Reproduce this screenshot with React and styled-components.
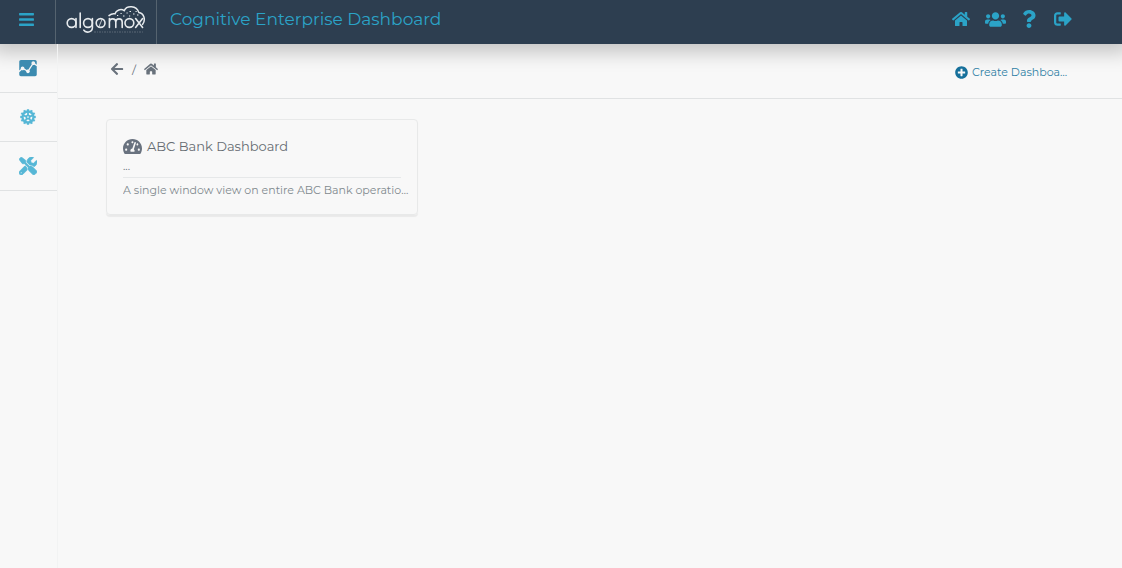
import React from "react";
import styled, { createGlobalStyle } from "styled-components";
import {
  FaArrowLeft,
  FaBars,
  FaHome,
  FaPlusCircle,
  FaQuestion,
  FaSignOutAlt,
  FaTachometerAlt,
  FaTools,
  FaUsers
} from "react-icons/fa";
import { IoMdAnalytics } from "react-icons/io";

const navy = "#2d3e50";
const cyan = "#2ba3c7";
const line = "#e0e2e3";
const slate = "#69727c";

const GlobalStyle = createGlobalStyle`
  *, *::before, *::after {
    box-sizing: border-box;
  }
  body {
    margin: 0;
    background: #f8f8f8;
    color: ${slate};
    font-family: Montserrat, "Open Sans", sans-serif;
    font-size: 11px;
  }
  a {
    color: inherit;
    text-decoration: none;
  }
  button {
    border: 0;
    padding: 0;
    background: none;
    color: inherit;
    font: inherit;
    cursor: pointer;
  }
  svg {
    display: block;
    flex: none;
  }
`;

const Page = styled.div`
  min-height: 100vh;
  display: flex;
  flex-direction: column;
  overflow-x: hidden;
`;

const Header = styled.header`
  display: flex;
  align-items: stretch;
  height: 44px;
  padding-bottom: 6px;
  background: linear-gradient(to right, #55636f, #55636f) 55px 0 / 1px 100% no-repeat,
    linear-gradient(to right, #55636f, #55636f) 156px 0 / 1px 100% no-repeat, ${navy};
  color: ${cyan};
  box-shadow: 0 0 20px 8px rgba(0, 0, 0, 0.22);
`;

const MenuButton = styled.button`
  display: flex;
  align-items: center;
  justify-content: center;
  width: 52px;
  font-size: 17px;
`;

const LogoLink = styled.a`
  display: flex;
  align-items: center;
  margin-left: 14px;
`;

const Title = styled.h1`
  flex: 1;
  align-self: center;
  margin: 0 0 0 24px;
  font-size: 17px;
  font-weight: 400;
  line-height: 24px;
  white-space: nowrap;
`;

const HeaderNav = styled.nav`
  display: flex;
  align-items: center;
  padding-right: 42px;
`;

const HeaderLink = styled.a`
  display: flex;
  align-items: center;
  justify-content: center;
  width: 34px;
  font-size: ${({ $size }) => $size || 18}px;
`;

const Body = styled.div`
  flex: 1;
  display: flex;
`;

const Sidebar = styled.nav`
  width: 58px;
  border-right: 1px solid #f2f3f3;
`;

const SideLink = styled.a`
  display: flex;
  align-items: center;
  justify-content: center;
  height: 49px;
  padding-right: 2px;
  border-bottom: 1px solid ${line};
  color: ${({ $active }) => ($active ? "#3c8bb0" : "#56b7d6")};
  font-size: ${({ $size }) => $size || 20}px;
`;

const Main = styled.main`
  flex: 1;
  min-width: 0;
`;

const Toolbar = styled.div`
  display: flex;
  align-items: center;
  justify-content: space-between;
  height: 55px;
  padding: 0 52px;
  border-bottom: 1px solid ${line};
`;

const Breadcrumb = styled.nav`
  display: flex;
  align-items: center;
  gap: 8px;
  padding-bottom: 4px;
  font-size: 14px;
`;

const Slash = styled.span`
  font-size: 12px;
`;

const CreateButton = styled.button`
  display: flex;
  align-items: center;
  gap: 4px;
  padding-top: 2px;
  color: #2f7fa5;
  line-height: 16px;

  svg {
    color: #16709b;
  }
`;

const Ellipsis = styled.span`
  display: block;
  max-width: ${({ $max }) => $max || "100%"};
  overflow: hidden;
  text-overflow: ellipsis;
  white-space: nowrap;
`;

const Cards = styled.section`
  display: grid;
  grid-template-columns: repeat(auto-fill, 312px);
  gap: 24px;
  padding: 20px 48px;
`;

const Card = styled.article`
  padding: 16px 8px 16px 16px;
  border: 1px solid #e8e9e9;
  border-radius: 4px;
  box-shadow: 0 2px 1px rgba(0, 0, 0, 0.06);
`;

const CardTitle = styled.h2`
  display: flex;
  align-items: center;
  gap: 5px;
  margin: 0;
  font-size: 13px;
  font-weight: 400;
  line-height: 20px;
  color: #666c72;

  svg {
    color: #69727f;
  }
`;

const CardMeta = styled.div`
  margin-right: 8px;
  padding: 2px 0 3px;
  border-bottom: 1px solid #e6e8e9;
  line-height: 16px;
`;

const CardText = styled.p`
  margin: 4px 0 0;
  color: #7f898e;
  line-height: 16px;
`;

const Logo = () => (
  <svg width="80" height="36" viewBox="0 0 80 36" fill="none" stroke="#e6eaed" role="img" aria-label="algomox">
    <g strokeWidth="1.6" strokeLinecap="round">
      <circle cx="5.6" cy="22" r="4.4" />
      <path d="M10 17.6v8.8M14.2 12v14.4" />
      <circle cx="22" cy="22" r="4.4" />
      <path d="M26.4 17.6v9c0 5.400-7 5.400-8.600 2.600" />
      <circle cx="34.6" cy="22" r="4.4" />
      <path d="M36 18.500l-3 7" strokeWidth="0.8" />
      <path d="M43.400 26.400v-8.800M43.400 21c0-4.200 6.400-4.200 6.400 0v5.400M49.800 21c0-4.200 6.400-4.200 6.400 0v5.400" />
      <circle cx="63.4" cy="22" r="4.4" />
      <path d="M69.600 17.600l7 8.800M76.600 17.600l-7 8.800" />
    </g>
    <path
      d="M43 14.600c1.800-1.600 4-2.200 6-1.800 1-3.800 6-5.400 9.200-3.200 2.400-5.400 12.400-5.400 14.600 1.800 5.200.6 7.200 7.600 3.800 12"
      strokeWidth="1.5"
      strokeLinecap="round"
    />
    <path
      d="M51 14.500h1.200M54.500 12.500h1.200M57 15h1.500M60.500 12h1.200M63 15h1.200M63.500 10.500h1.500M67 13h1.500M69.500 10.500h1.200M71 14h1.500"
      strokeWidth="1.2"
    />
    <path d="M28 31h49" strokeWidth="1" strokeDasharray="2 1 1 1" opacity="0.25" />
  </svg>
);

const GearIcon = () => {
  const teeth = Array.from({ length: 12 }, (_, i) => i * 30);
  const spokes = Array.from({ length: 5 }, (_, i) => i * 72);
  return (
    <svg width="16" height="16" viewBox="0 0 32 32" fill="none" stroke="currentColor" aria-hidden="true">
      {teeth.map((a) => (
        <path key={a} d="M16 .5v4" strokeWidth="4.6" transform={`rotate(${a} 16 16)`} />
      ))}
      <circle cx="16" cy="16" r="11" strokeWidth="4.6" />
      <circle cx="16" cy="16" r="3.4" strokeWidth="3.4" />
      {spokes.map((a) => (
        <path key={a} d="M16 5v7" strokeWidth="3.6" transform={`rotate(${a} 16 16)`} />
      ))}
    </svg>
  );
};

const App = () => (
  <>
    <GlobalStyle />
    <Page>
      <Header>
        <MenuButton aria-label="Menu">
          <FaBars />
        </MenuButton>
        <LogoLink href="#home">
          <Logo />
        </LogoLink>
        <Title>Cognitive Enterprise Dashboard</Title>
        <HeaderNav>
          <HeaderLink href="#home" aria-label="Home">
            <FaHome />
          </HeaderLink>
          <HeaderLink href="#users" aria-label="Users" $size={21}>
            <FaUsers />
          </HeaderLink>
          <HeaderLink href="#help" aria-label="Help">
            <FaQuestion />
          </HeaderLink>
          <HeaderLink href="#logout" aria-label="Log out">
            <FaSignOutAlt />
          </HeaderLink>
        </HeaderNav>
      </Header>
      <Body>
        <Sidebar>
          <SideLink href="#dashboards" aria-label="Dashboards" $active>
            <IoMdAnalytics />
          </SideLink>
          <SideLink href="#settings" aria-label="Settings">
            <GearIcon />
          </SideLink>
          <SideLink href="#tools" aria-label="Tools" $size={18}>
            <FaTools strokeWidth={20} />
          </SideLink>
        </Sidebar>
        <Main>
          <Toolbar>
            <Breadcrumb>
              <a href="#back" aria-label="Back">
                <FaArrowLeft />
              </a>
              <Slash>/</Slash>
              <a href="#home" aria-label="Home">
                <FaHome />
              </a>
            </Breadcrumb>
            <CreateButton>
              <FaPlusCircle size={13} />
              <Ellipsis $max="98px">Create Dashboard</Ellipsis>
            </CreateButton>
          </Toolbar>
          <Cards>
            <Card>
              <CardTitle>
                <FaTachometerAlt size={19} />
                ABC Bank Dashboard
              </CardTitle>
              <CardMeta>...</CardMeta>
              <CardText>
                <Ellipsis>A single window view on entire ABC Bank operations</Ellipsis>
              </CardText>
            </Card>
          </Cards>
        </Main>
      </Body>
    </Page>
  </>
);

export default App;
